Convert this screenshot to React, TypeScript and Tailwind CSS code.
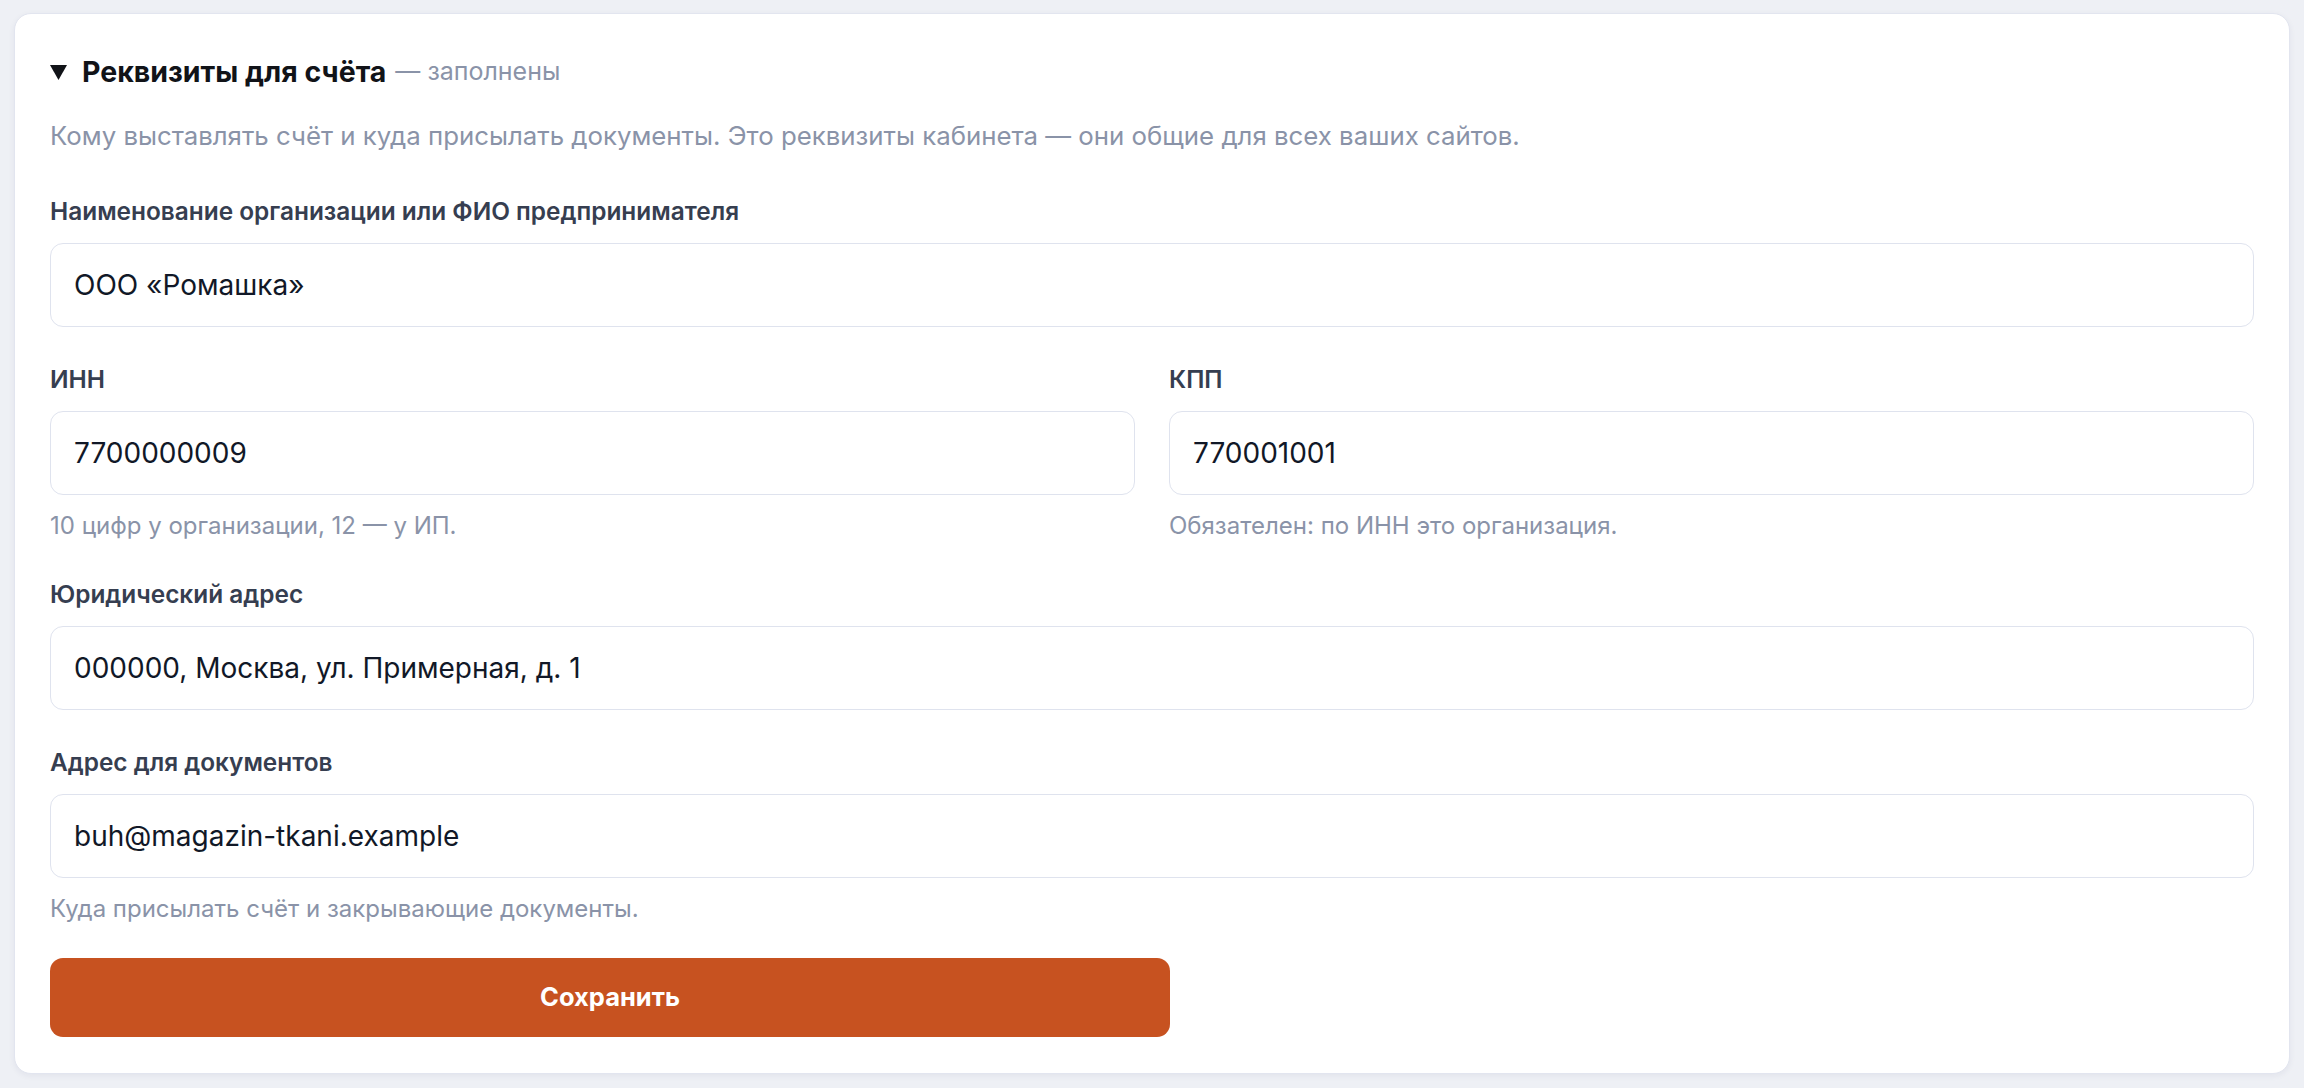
import React from "react";

function Field({
  label,
  value,
  help,
}: {
  label: string;
  value: string;
  help?: string;
}) {
  return (
    <div className="flex flex-col">
      <div className="text-[24.4px] leading-[32px] font-semibold text-[#363e50] mb-[16px]">{label}</div>
      <div className="h-[84px] rounded-[13px] border-[1.5px] border-[#dfe3ee] bg-white flex items-center px-[23px]">
        <span className="text-[28px] text-[#111827]">{value}</span>
      </div>
      {help ? (
        <div className="mt-[16px] text-[24px] leading-[30px] text-[#8a93a8]">{help}</div>
      ) : null}
    </div>
  );
}

export default function App() {
  return (
    <div
      className="min-h-[1088px] w-full bg-[#eef0f5] p-[14px] pt-[13px]"
      style={{ fontFamily: "Inter, 'Noto Sans', sans-serif" }}
    >
      <div className="rounded-[17px] border border-[#e2e5ef] bg-white shadow-[0_2px_6px_rgba(30,40,80,0.06)] px-[35px] pt-[40px] pb-[36px]">
        <div className="flex items-center h-[36px]">
          <svg width="17" height="15" viewBox="0 0 17 15" className="mr-[15px]">
            <polygon points="0,0 17,0 8.5,15" fill="#111318" />
          </svg>
          <span className="text-[28.5px] font-bold text-[#111318]">Реквизиты для счёта</span>
          <span className="text-[25px] text-[#8a93a8] ml-[9px]">— заполнены</span>
        </div>
        <div className="mt-[29px] text-[25.8px] leading-[34px] text-[#8a93a8]">
          Кому выставлять счёт и куда присылать документы. Это реквизиты кабинета — они общие для всех ваших сайтов.
        </div>
        <div className="mt-[42px]">
          <Field label="Наименование организации или ФИО предпринимателя" value="ООО «Ромашка»" />
        </div>
        <div className="mt-[36px] grid grid-cols-2 gap-x-[34px]">
          <Field label="ИНН" value="7700000009" help="10 цифр у организации, 12 — у ИП." />
          <Field label="КПП" value="770001001" help="Обязателен: по ИНН это организация." />
        </div>
        <div className="mt-[37px]">
          <Field label="Юридический адрес" value="000000, Москва, ул. Примерная, д. 1" />
        </div>
        <div className="mt-[36px]">
          <Field
            label="Адрес для документов"
            value="buh@magazin-tkani.example"
            help="Куда присылать счёт и закрывающие документы."
          />
        </div>
        <button className="mt-[34px] w-[1120px] h-[79px] rounded-[13px] bg-[#c75220] text-white text-[25.5px] font-bold flex items-center justify-center">
          Сохранить
        </button>
      </div>
    </div>
  );
}
